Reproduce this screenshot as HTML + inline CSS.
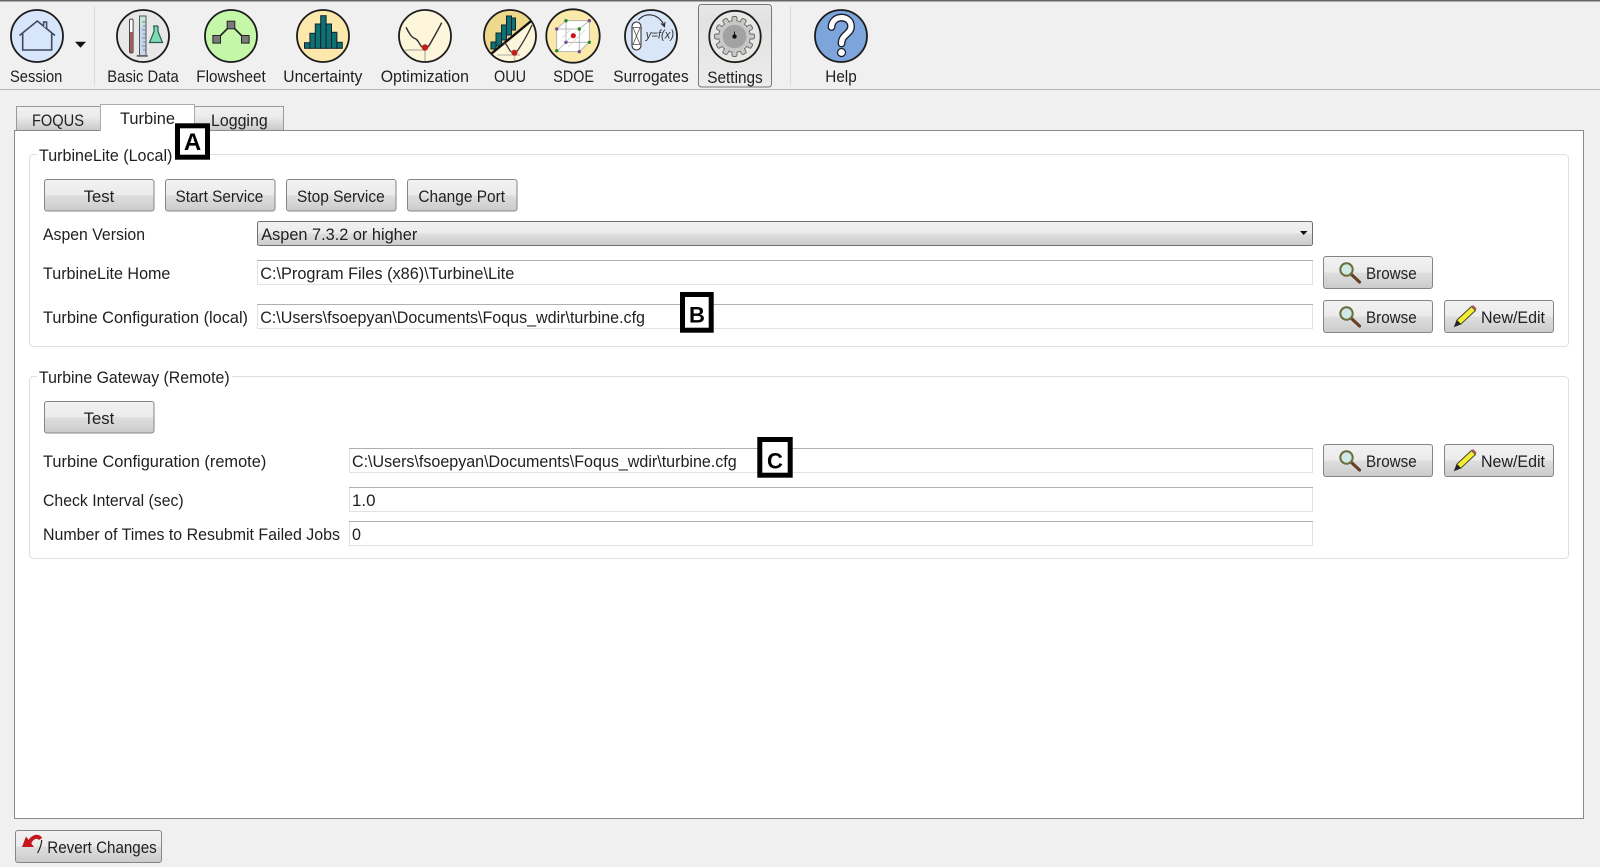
<!DOCTYPE html>
<html><head><meta charset="utf-8"><title>FOQUS Settings</title>
<style>
html,body{margin:0;padding:0;background:#f0f0f0;width:1600px;height:867px;overflow:hidden}
svg{display:block}
text{font-family:"Liberation Sans",sans-serif;font-size:17px;fill:#1f1f1f}
.b{fill:url(#btn);stroke:#858585}
.i{fill:#fff;stroke:#e2e2e2}
.c{stroke:#1c1c1c;stroke-width:1.8}
.k{font-weight:bold;font-size:24px;fill:#000}
.box{fill:#fff;stroke:#000;stroke-width:5}
</style></head><body>
<svg width="1600" height="867" viewBox="0 0 1600 867" xmlns="http://www.w3.org/2000/svg">
<defs>
<linearGradient id="btn" x1="0" y1="0" x2="0" y2="1"><stop offset="0" stop-color="#f2f2f2"/><stop offset=".48" stop-color="#ebebeb"/><stop offset=".52" stop-color="#dedede"/><stop offset="1" stop-color="#cbcbcb"/></linearGradient>
<linearGradient id="tab" x1="0" y1="0" x2="0" y2="1"><stop offset="0" stop-color="#f2f2f2"/><stop offset=".4" stop-color="#ebebeb"/><stop offset="1" stop-color="#c6c6c6"/></linearGradient>
<linearGradient id="set" x1="0" y1="0" x2="0" y2="1"><stop offset="0" stop-color="#e8e8e8"/><stop offset=".2" stop-color="#e2e2e2"/><stop offset="1" stop-color="#ececec"/></linearGradient>
<clipPath id="ouu"><circle cx="510" cy="36" r="26"/></clipPath>
</defs>
<rect width="1600" height="867" fill="#f0f0f0"/>
<rect width="1600" height="1.5" fill="#666"/>
<rect y="89" width="1600" height="1" fill="#b4b4b4"/>
<rect x="94" y="6" width="1" height="79" fill="#dadada"/>
<rect x="790" y="6" width="1" height="79" fill="#dadada"/>

<!-- Session -->
<circle class="c" cx="37" cy="36" r="26" fill="#d8e6fc"/>
<path d="M19.5 35.5 37.3 21 55 35.5M22.7 33V50H51.7V33" fill="none" stroke="#3e4a5c" stroke-width="1.6"/>
<path d="M43.6 26V22H46.6V28.5" fill="#d8e6fc" stroke="#3e4a5c" stroke-width="1.5"/>
<path d="M75 41.7H86L80.5 47.7Z" fill="#111"/>
<text x="10" y="82" textLength="52.3" lengthAdjust="spacingAndGlyphs">Session</text>

<!-- Basic Data -->
<circle class="c" cx="143" cy="36" r="26" fill="#e8e8e8"/>
<rect x="129.5" y="19" width="3.6" height="34" rx="1.5" fill="#fff" stroke="#444"/>
<rect x="130" y="32" width="2.6" height="20.5" fill="#a85c5c"/>
<rect x="139.5" y="16" width="6.5" height="40" fill="#c6d5f0" stroke="#555"/>
<rect x="140" y="16.5" width="5.5" height="10" fill="#c4e6dc"/>
<path d="M142 22h4M143 26h3M142 30h4M143 34h3M142 38h4M143 42h3M142 46h4M143 50h3" stroke="#667" stroke-width=".7"/>
<rect x="136.7" y="55" width="11" height="1.8" fill="#666"/>
<path d="M153 26h5M154 26v5.5L149.5 42.5h13L158 31.5V26" fill="#7edcb2" stroke="#2e5a50" stroke-width="1.2"/>

<!-- Flowsheet -->
<circle class="c" cx="231" cy="36" r="26" fill="#c5f7a9"/>
<path d="M217 39 231 25 245 39" fill="none" stroke="#222" stroke-width="1.6"/>
<rect x="227.2" y="21.2" width="7.6" height="7.6" fill="#7a7a7a" stroke="#222"/>
<rect x="212.9" y="35.5" width="7.6" height="7.6" fill="#7a7a7a" stroke="#222"/>
<rect x="241.5" y="35.5" width="7.6" height="7.6" fill="#7a7a7a" stroke="#222"/>

<!-- Uncertainty -->
<circle class="c" cx="323" cy="36" r="26" fill="#fbe8aa"/>
<g fill="#0e7272" stroke="#123">
<rect x="304.5" y="42.7" width="5.4" height="5.6"/><rect x="309.9" y="33.3" width="5.4" height="15"/><rect x="315.3" y="24" width="5.4" height="24.3"/><rect x="320.7" y="15.7" width="5.4" height="32.6"/><rect x="326.1" y="24" width="5.4" height="24.3"/><rect x="331.5" y="32.3" width="5.4" height="16"/><rect x="336.9" y="42.3" width="5.4" height="6"/>
</g>

<!-- Optimization -->
<circle class="c" cx="425" cy="36" r="26" fill="#fdf6da"/>
<path d="M405 50H426M425 48V61" stroke="#c8c4b2" stroke-width="1.8" fill="none"/>
<path d="M406 27.3C408.5 32 411 37 414.5 38.3 418.5 39.5 419 44 421.5 46.5 424 49 427 49.5 430 44 434 37 438 30 441.7 22.7" fill="none" stroke="#333" stroke-width="1.5"/>
<circle cx="425" cy="47.5" r="3.2" fill="#c0201a"/>

<!-- OUU -->
<circle cx="510" cy="36" r="26" fill="#fdf6da"/>
<g clip-path="url(#ouu)">
<path d="M484 60 484 10 536 10 537 16Z" fill="#eed88c"/>
<g fill="#0e7272" stroke="#123"><rect x="491" y="42" width="5" height="7"/><rect x="496" y="33" width="5.5" height="13"/><rect x="501.5" y="25" width="5" height="15"/><rect x="506.5" y="16" width="5" height="19"/><rect x="511.5" y="18" width="4" height="12"/></g>
<path d="M491 54 536 17" stroke="#111" stroke-width="2.4"/>
<path d="M503 44C506 42 507 46 509 49 511 53 515 54 518 50 522 44 527 36 532 25" fill="none" stroke="#333" stroke-width="1.3"/>
<path d="M497 55H520M514.5 53V62" stroke="#c8c4b2" stroke-width="1.5" fill="none"/>
<circle cx="514.5" cy="52.7" r="3" fill="#c0201a"/>
</g>
<circle class="c" cx="510" cy="36" r="26" fill="none"/>

<!-- SDOE -->
<circle class="c" cx="573" cy="36" r="26.7" fill="#fbe9ac"/>
<path d="M556.7 29 566 20.7H589.3V42.3L579.3 51.5H556.7Z" fill="#fff"/>
<path d="M556.7 29H579.3V51.5H556.7ZM566 20.7H589.3V42.3H566ZM556.7 29 566 20.7M579.3 29 589.3 20.7M579.3 51.5 589.3 42.3M556.7 51.5 566 42.3" fill="none" stroke="#a8a8a8" stroke-width=".8"/>
<path d="M560 48 576 32M568 47 585 30M562 38 572 28" stroke="#ccc" stroke-width=".6"/>
<g fill="#2a8a2a"><circle cx="566" cy="20.7" r="1.7"/><circle cx="589.3" cy="20.7" r="1.7" fill="#7a4a9a"/><circle cx="556.7" cy="29" r="1.7" fill="#7a4a9a"/><circle cx="579.3" cy="29" r="1.7"/><circle cx="566" cy="42.3" r="1.7" fill="#7a4a9a"/><circle cx="589.3" cy="42.3" r="1.7"/><circle cx="556.7" cy="50.7" r="1.7"/><circle cx="579.3" cy="51.7" r="1.7" fill="#7a4a9a"/></g>
<circle cx="573.3" cy="35.7" r="2.6" fill="#c8141c"/>

<!-- Surrogates -->
<circle class="c" cx="651" cy="36" r="26" fill="#d9e6f8"/>
<rect x="632" y="22" width="9" height="28" rx="4.5" fill="#fff" stroke="#333" stroke-width="1.1"/>
<path d="M633 27.5H640L633 44.5H640Z" fill="none" stroke="#555" stroke-width=".8"/>
<path d="M638.5 20C645 12 658 13 664 25" fill="none" stroke="#222" stroke-width="1.1"/>
<path d="M661 23.5 664.4 26.5 665 22" fill="none" stroke="#222" stroke-width="1.1"/>
<text x="645.7" y="38.5" textLength="28.5" lengthAdjust="spacingAndGlyphs" style="font-size:11.5px;font-style:italic;fill:#333">y=f(x)</text>

<!-- Settings -->
<rect x="698.5" y="4.5" width="73" height="82.5" rx="3" fill="url(#set)" stroke="#777"/>
<circle class="c" cx="735" cy="36.5" r="25.7" fill="#e9e7e3"/>
<circle cx="734.5" cy="36.5" r="15.8" fill="none" stroke="#666" stroke-width=".9"/>
<g fill="#c8c8c8" stroke="#666" stroke-width=".9">
<rect x="732" y="16.5" width="5" height="7" rx="1.6"/>
<rect x="732" y="16.5" width="5" height="7" rx="1.6" transform="rotate(30 734.5 36.5)"/>
<rect x="732" y="16.5" width="5" height="7" rx="1.6" transform="rotate(60 734.5 36.5)"/>
<rect x="732" y="16.5" width="5" height="7" rx="1.6" transform="rotate(90 734.5 36.5)"/>
<rect x="732" y="16.5" width="5" height="7" rx="1.6" transform="rotate(120 734.5 36.5)"/>
<rect x="732" y="16.5" width="5" height="7" rx="1.6" transform="rotate(150 734.5 36.5)"/>
<rect x="732" y="16.5" width="5" height="7" rx="1.6" transform="rotate(180 734.5 36.5)"/>
<rect x="732" y="16.5" width="5" height="7" rx="1.6" transform="rotate(210 734.5 36.5)"/>
<rect x="732" y="16.5" width="5" height="7" rx="1.6" transform="rotate(240 734.5 36.5)"/>
<rect x="732" y="16.5" width="5" height="7" rx="1.6" transform="rotate(270 734.5 36.5)"/>
<rect x="732" y="16.5" width="5" height="7" rx="1.6" transform="rotate(300 734.5 36.5)"/>
<rect x="732" y="16.5" width="5" height="7" rx="1.6" transform="rotate(330 734.5 36.5)"/>
</g>
<circle cx="734.5" cy="36.5" r="15.3" fill="#c8c8c8"/>
<circle cx="734.5" cy="36.5" r="11.8" fill="#a2a2a2"/>
<circle cx="734.5" cy="36.5" r="2.2" fill="#111"/>
<path d="M734.5 31.5v3" stroke="#111"/>

<!-- Help -->
<circle class="c" cx="841" cy="36" r="26" fill="#7da5dc"/>
<path d="M831.5 27C832 14.5 851 14.5 851 26.5 851 34 841.5 34.5 841.5 43.5" fill="none" stroke="#1a1a2a" stroke-width="7.8" stroke-linecap="round"/>
<path d="M831.5 27C832 14.5 851 14.5 851 26.5 851 34 841.5 34.5 841.5 43.5" fill="none" stroke="#fff" stroke-width="5.2" stroke-linecap="round"/>
<circle cx="841.5" cy="52.5" r="4" fill="#fff" stroke="#1a1a2a" stroke-width="1.2"/>

<!-- toolbar labels -->
<text x="107.3" y="82" textLength="71.4" lengthAdjust="spacingAndGlyphs">Basic Data</text>
<text x="196.3" y="82" textLength="69.4" lengthAdjust="spacingAndGlyphs">Flowsheet</text>
<text x="283.3" y="82" textLength="79" lengthAdjust="spacingAndGlyphs">Uncertainty</text>
<text x="380.7" y="82" textLength="88.3" lengthAdjust="spacingAndGlyphs">Optimization</text>
<text x="494" y="82" textLength="32" lengthAdjust="spacingAndGlyphs">OUU</text>
<text x="553.3" y="82" textLength="40.7" lengthAdjust="spacingAndGlyphs">SDOE</text>
<text x="613.3" y="82" textLength="75.4" lengthAdjust="spacingAndGlyphs">Surrogates</text>
<text x="707.3" y="83" textLength="55.4" lengthAdjust="spacingAndGlyphs">Settings</text>
<text x="825.3" y="82" textLength="31.4" lengthAdjust="spacingAndGlyphs">Help</text>

<!-- tabs and panel -->
<rect x="16.5" y="106.5" width="84" height="25" fill="url(#tab)" stroke="#999"/>
<rect x="194.5" y="106.5" width="89" height="25" fill="url(#tab)" stroke="#999"/>
<rect x="14.5" y="130.5" width="1569" height="688" fill="#fff" stroke="#8a8a8a"/>
<path d="M100.5 131V104.5H194.5V131" fill="#fff" stroke="#aaa"/>
<rect x="101" y="129" width="93" height="3" fill="#fff"/>
<text x="32" y="126" textLength="52" lengthAdjust="spacingAndGlyphs">FOQUS</text>
<text x="120" y="124" textLength="55" lengthAdjust="spacingAndGlyphs">Turbine</text>
<text x="211" y="126" textLength="56.7" lengthAdjust="spacingAndGlyphs">Logging</text>

<!-- fieldset 1 -->
<rect x="29.5" y="154.5" width="1539" height="192" rx="4" fill="#fff" stroke="#dedede"/>
<rect x="37" y="150" width="140" height="10" fill="#fff"/>
<text x="39" y="161" textLength="133.4" lengthAdjust="spacingAndGlyphs">TurbineLite (Local)</text>

<rect class="b" x="44.5" y="179.5" width="109.5" height="31.5" rx="2.5"/>
<text x="83.7" y="202" textLength="30.6" lengthAdjust="spacingAndGlyphs">Test</text>
<rect class="b" x="165.5" y="179.5" width="109.5" height="31.5" rx="2.5"/>
<text x="175.5" y="202" textLength="87.8" lengthAdjust="spacingAndGlyphs">Start Service</text>
<rect class="b" x="286.5" y="179.5" width="109.5" height="31.5" rx="2.5"/>
<text x="297" y="202" textLength="87.7" lengthAdjust="spacingAndGlyphs">Stop Service</text>
<rect class="b" x="407.5" y="179.5" width="109.5" height="31.5" rx="2.5"/>
<text x="418.4" y="202" textLength="86.6" lengthAdjust="spacingAndGlyphs">Change Port</text>

<text x="43" y="240" textLength="102" lengthAdjust="spacingAndGlyphs">Aspen Version</text>
<rect x="257.5" y="221.5" width="1055" height="24" rx="2" fill="url(#btn)" stroke="#707070"/>
<text x="261.2" y="240" textLength="156.1" lengthAdjust="spacingAndGlyphs">Aspen 7.3.2 or higher</text>
<path d="M1300 231H1307.5L1303.7 235Z" fill="#111"/>

<text x="43" y="279" textLength="127.4" lengthAdjust="spacingAndGlyphs">TurbineLite Home</text>
<rect class="i" x="257.5" y="260.5" width="1055" height="24"/><rect x="257" y="260" width="1056" height="1" fill="#b0b0b0"/>
<text x="260.2" y="279" textLength="254.1" lengthAdjust="spacingAndGlyphs">C:\Program Files (x86)\Turbine\Lite</text>

<text x="43" y="323" textLength="205" lengthAdjust="spacingAndGlyphs">Turbine Configuration (local)</text>
<rect class="i" x="257.5" y="304.5" width="1055" height="24"/><rect x="257" y="304" width="1056" height="1" fill="#b0b0b0"/>
<text x="260.2" y="323" textLength="384.8" lengthAdjust="spacingAndGlyphs">C:\Users\fsoepyan\Documents\Foqus_wdir\turbine.cfg</text>

<!-- browse row 1 -->
<rect class="b" x="1323.5" y="256.5" width="109" height="32" rx="2.5"/>
<text x="1366" y="279" textLength="50.7" lengthAdjust="spacingAndGlyphs">Browse</text>
<path d="M1352 275 1359.5 282" stroke="#6b3f22" stroke-width="3.2" stroke-linecap="round"/><circle cx="1346.5" cy="269.5" r="6.2" fill="#cfe9e6" stroke="#6d6d3c" stroke-width="2"/>
<!-- browse row 2 -->
<rect class="b" x="1323.5" y="300.5" width="109" height="32" rx="2.5"/>
<text x="1366" y="323" textLength="50.7" lengthAdjust="spacingAndGlyphs">Browse</text>
<path d="M1352 319 1359.5 326" stroke="#6b3f22" stroke-width="3.2" stroke-linecap="round"/><circle cx="1346.5" cy="313.5" r="6.2" fill="#cfe9e6" stroke="#6d6d3c" stroke-width="2"/>
<rect class="b" x="1444.5" y="300.5" width="109" height="32" rx="2.5"/>
<text x="1481" y="323" textLength="64" lengthAdjust="spacingAndGlyphs">New/Edit</text>
<path d="M1454.5 326.5 1457 320 1471.5 306.5 1475.5 310.5 1461 324Z" fill="#f5ee30" stroke="#443" stroke-width="1"/><path d="M1454.5 326.5 1457 320 1461 324Z" fill="#222"/><path d="M1471.5 306.5 1473 305 1476.5 308.5 1475.5 310.5Z" fill="#a56"/>

<!-- fieldset 2 -->
<rect x="29.5" y="376.5" width="1539" height="182" rx="4" fill="#fff" stroke="#dedede"/>
<rect x="37" y="372" width="195" height="10" fill="#fff"/>
<text x="39" y="383" textLength="190.6" lengthAdjust="spacingAndGlyphs">Turbine Gateway (Remote)</text>
<rect class="b" x="44.5" y="401.5" width="109.5" height="31.5" rx="2.5"/>
<text x="83.7" y="424" textLength="30.6" lengthAdjust="spacingAndGlyphs">Test</text>

<text x="43" y="467" textLength="223.3" lengthAdjust="spacingAndGlyphs">Turbine Configuration (remote)</text>
<rect class="i" x="349.5" y="448.5" width="963" height="24"/><rect x="349" y="448" width="964" height="1" fill="#b0b0b0"/>
<text x="352" y="467" textLength="384.7" lengthAdjust="spacingAndGlyphs">C:\Users\fsoepyan\Documents\Foqus_wdir\turbine.cfg</text>

<rect class="b" x="1323.5" y="444.5" width="109" height="32" rx="2.5"/>
<text x="1366" y="467" textLength="50.7" lengthAdjust="spacingAndGlyphs">Browse</text>
<path d="M1352 463 1359.5 470" stroke="#6b3f22" stroke-width="3.2" stroke-linecap="round"/><circle cx="1346.5" cy="457.5" r="6.2" fill="#cfe9e6" stroke="#6d6d3c" stroke-width="2"/>
<rect class="b" x="1444.5" y="444.5" width="109" height="32" rx="2.5"/>
<text x="1481" y="467" textLength="64" lengthAdjust="spacingAndGlyphs">New/Edit</text>
<path d="M1454.5 470.5 1457 464 1471.5 450.5 1475.5 454.5 1461 468Z" fill="#f5ee30" stroke="#443" stroke-width="1"/><path d="M1454.5 470.5 1457 464 1461 468Z" fill="#222"/><path d="M1471.5 450.5 1473 449 1476.5 452.5 1475.5 454.5Z" fill="#a56"/>

<text x="43" y="506" textLength="140.7" lengthAdjust="spacingAndGlyphs">Check Interval (sec)</text>
<rect class="i" x="349.5" y="487.5" width="963" height="24"/><rect x="349" y="487" width="964" height="1" fill="#b0b0b0"/>
<text x="352" y="506" textLength="23.5" lengthAdjust="spacingAndGlyphs">1.0</text>

<text x="43" y="540" textLength="297" lengthAdjust="spacingAndGlyphs">Number of Times to Resubmit Failed Jobs</text>
<rect class="i" x="349.5" y="521.5" width="963" height="24"/><rect x="349" y="521" width="964" height="1" fill="#b0b0b0"/>
<text x="352" y="540" textLength="9" lengthAdjust="spacingAndGlyphs">0</text>

<!-- callouts -->
<rect class="box" x="177.5" y="125.8" width="30" height="31.4"/>
<text class="k" x="192.5" y="150" text-anchor="middle">A</text>
<rect class="box" x="682.5" y="294.5" width="28.7" height="35.7"/>
<text class="k" x="697" y="322.5" text-anchor="middle" style="font-size:22px">B</text>
<rect class="box" x="759.8" y="439.5" width="30.4" height="35.7"/>
<text class="k" x="775" y="468.5" text-anchor="middle" style="font-size:22px">C</text>

<!-- revert -->
<rect class="b" x="15.5" y="830.5" width="146" height="32" rx="2.5"/>
<path d="M29 844C31 837 38 834.5 40.5 839" fill="none" stroke="#c4161c" stroke-width="4"/>
<path d="M22 847 26 836.5 34 847Z" fill="#c4161c"/>
<path d="M41.7 840C41.5 845 39.5 849.5 37.5 853" fill="none" stroke="#222" stroke-width="1.2"/>
<text x="47.3" y="853" textLength="109.4" lengthAdjust="spacingAndGlyphs">Revert Changes</text>
</svg>
</body></html>
